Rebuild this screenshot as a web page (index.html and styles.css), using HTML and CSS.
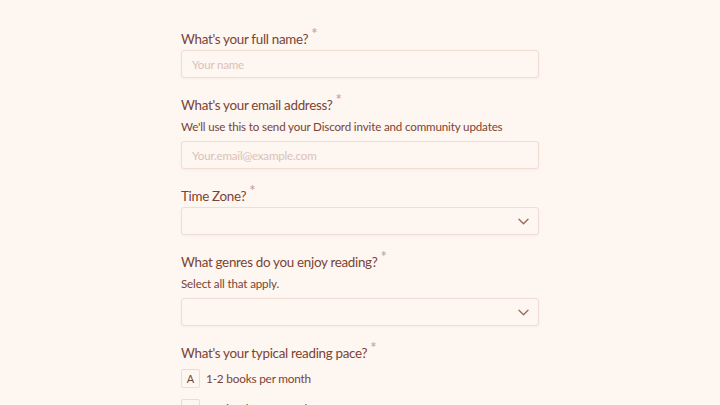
FILE: index.html
```html
<!DOCTYPE html>
<html lang="en">
<head>
<meta charset="utf-8">
<title>Book Club Signup</title>
<link rel="stylesheet" href="styles.css">
</head>
<body>
<main class="form">
  <div class="field">
    <label class="label">What's your full name?<span class="req">*</span></label>
    <div class="input"><span class="placeholder">Your name</span></div>
  </div>
  <div class="field">
    <label class="label">What's your email address?<span class="req">*</span></label>
    <p class="help">We'll use this to send your Discord invite and community updates</p>
    <div class="input"><span class="placeholder">Your.email@example.com</span></div>
  </div>
  <div class="field">
    <label class="label">Time Zone?<span class="req">*</span></label>
    <div class="input select">
      <svg class="chev" width="11" height="7" viewBox="0 0 11 7"><path d="M1 1.2l4.5 4.5 4.5-4.5" fill="none" stroke="currentColor" stroke-width="1.4" stroke-linecap="round" stroke-linejoin="round"/></svg>
    </div>
  </div>
  <div class="field">
    <label class="label">What genres do you enjoy reading?<span class="req">*</span></label>
    <p class="help">Select all that apply.</p>
    <div class="input select">
      <svg class="chev" width="11" height="7" viewBox="0 0 11 7"><path d="M1 1.2l4.5 4.5 4.5-4.5" fill="none" stroke="currentColor" stroke-width="1.4" stroke-linecap="round" stroke-linejoin="round"/></svg>
    </div>
  </div>
  <div class="field">
    <label class="label">What's your typical reading pace?<span class="req">*</span></label>
    <ul class="options">
      <li class="option"><span class="key">A</span><span class="opt-text">1-2 books per month</span></li>
      <li class="option"><span class="key">B</span><span class="opt-text">3-4 books per month</span></li>
    </ul>
  </div>
</main>
</body>
</html>
```

FILE: styles.css
```css
html, body {
  margin: 0;
  padding: 0;
  background: #fdf6f1;
  height: 100%;
  overflow: hidden;
}
body {
  font-family: Lato, "Noto Sans", sans-serif;
  color: #7a4434;
}
.form {
  width: 358px;
  margin-left: 181px;
  padding-top: 28px;
  display: flex;
  flex-direction: column;
  gap: 16px;
}
.field {
  display: flex;
  flex-direction: column;
}
.label {
  font-size: 13.4px;
  line-height: 20px;
  height: 20px;
  margin-bottom: 2px;
  color: #7a4434;
  letter-spacing: -0.3px;
}
.req {
  color: #c49a8a;
  font-size: 15px;
  position: relative;
  top: -5px;
  margin-left: 3px;
}
.help {
  margin: 2px 0 5px;
  font-size: 11.6px;
  line-height: 18px;
  letter-spacing: -0.15px;
  color: #7a4434;
}
.input {
  box-sizing: border-box;
  height: 28px;
  border: 1px solid #f1ddd2;
  border-radius: 3px;
  background: #fdf6f1;
  box-shadow: 0 1px 2px rgba(180, 130, 110, 0.08);
  display: flex;
  align-items: center;
  padding: 0 10px;
}
.placeholder {
  font-size: 11.6px;
  letter-spacing: -0.2px;
  color: #dcc2b6;
}
.select {
  justify-content: flex-end;
  padding-right: 9px;
}
.chev {
  color: #9a6d60;
}
.options {
  list-style: none;
  margin: 5px 0 0;
  padding: 0;
  display: flex;
  flex-direction: column;
  gap: 11px;
}
.option {
  display: flex;
  align-items: center;
  gap: 6px;
}
.key {
  box-sizing: border-box;
  width: 19px;
  height: 19px;
  border: 1px solid #f0dbd0;
  border-radius: 2px;
  background: #fdf6f1;
  font-size: 11px;
  display: flex;
  align-items: center;
  justify-content: center;
  color: #7a4434;
}
.opt-text {
  font-size: 11.8px;
  letter-spacing: -0.2px;
  color: #7a4434;
}
```
